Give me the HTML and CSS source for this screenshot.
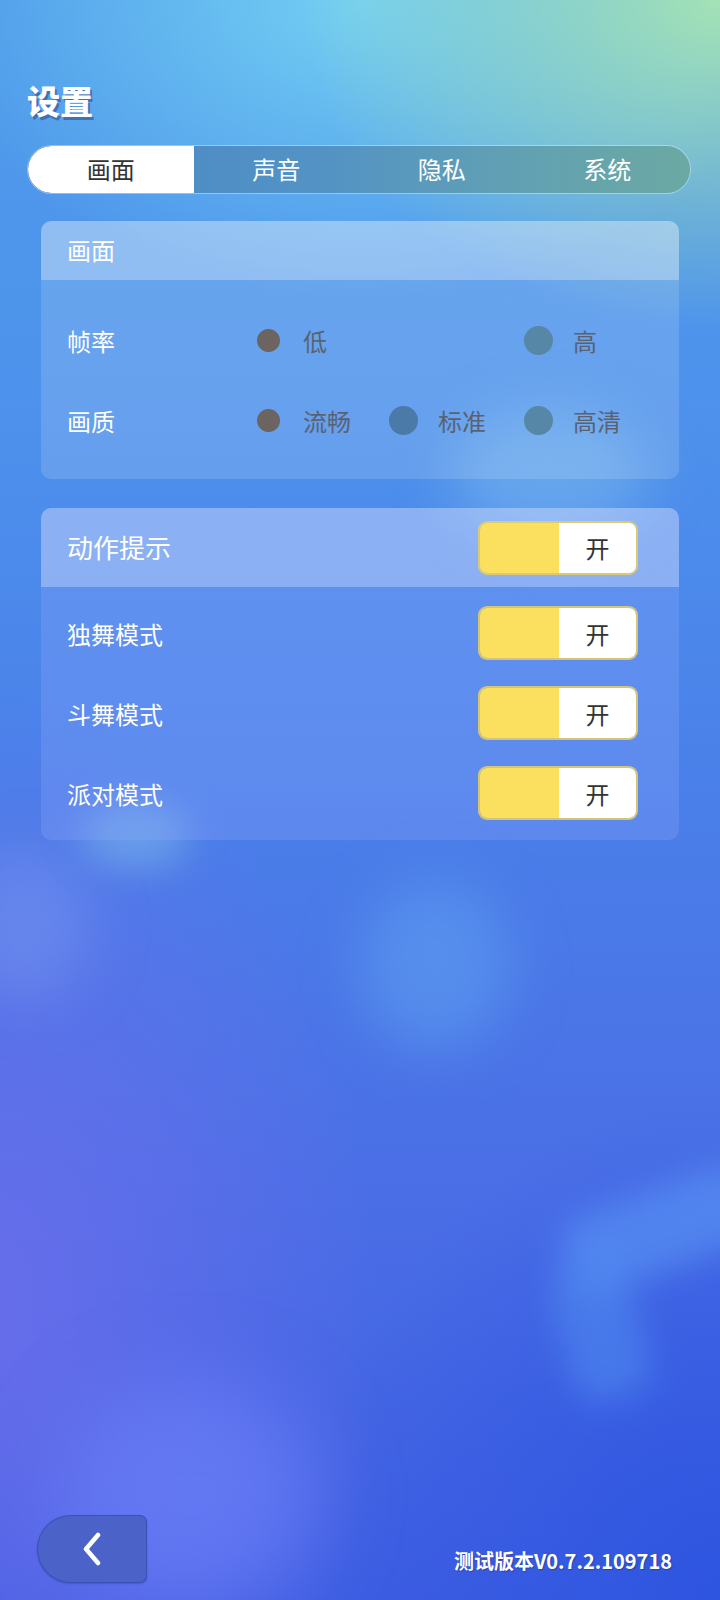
FILE: index.html
```html
<!DOCTYPE html>
<html lang="zh-CN">
<head>
  <meta charset="UTF-8" />
  <meta name="viewport" content="width=device-width, initial-scale=1" />
  <title>设置</title>
  <link rel="stylesheet" href="styles.css">
</head>
<body>
  <div class="screen">
    <!-- soft blurred shapes behind the content -->
    <div class="blob blob-a"></div>
    <div class="blob blob-b"></div>
    <div class="blob blob-c"></div>
    <div class="blob blob-d"></div>
    <div class="blob blob-e"></div>
    <div class="blob blob-f"></div>
    <div class="blob blob-g"></div>

    <h1 class="page-title">设置</h1>

    <nav class="tabs">
      <div class="tab active">画面</div>
      <div class="tab">声音</div>
      <div class="tab">隐私</div>
      <div class="tab">系统</div>
    </nav>

    <section class="panel">
      <div class="panel-head">画面</div>
      <div class="panel-body">
        <div class="option-row">
          <span class="row-label">帧率</span>
          <span class="choice"><i class="dot dot-on"></i>低</span>
          <span class="choice"></span>
          <span class="choice"><i class="dot dot-c"></i>高</span>
        </div>
        <div class="option-row">
          <span class="row-label">画质</span>
          <span class="choice"><i class="dot dot-on"></i>流畅</span>
          <span class="choice"><i class="dot dot-b"></i>标准</span>
          <span class="choice"><i class="dot dot-c"></i>高清</span>
        </div>
      </div>
    </section>

    <section class="panel panel-switches">
      <div class="panel-head switch-row">
        <span class="head-label">动作提示</span>
        <div class="switch"><span class="switch-on"></span><span class="switch-text">开</span></div>
      </div>
      <div class="panel-body switch-list">
        <div class="switch-row">
          <span class="row-label">独舞模式</span>
          <div class="switch"><span class="switch-on"></span><span class="switch-text">开</span></div>
        </div>
        <div class="switch-row">
          <span class="row-label">斗舞模式</span>
          <div class="switch"><span class="switch-on"></span><span class="switch-text">开</span></div>
        </div>
        <div class="switch-row">
          <span class="row-label">派对模式</span>
          <div class="switch"><span class="switch-on"></span><span class="switch-text">开</span></div>
        </div>
      </div>
    </section>

    <footer class="footer">
      <button class="back-btn" aria-label="返回">
        <svg width="22" height="34" viewBox="0 0 22 34">
          <path d="M17 3 L5 17 L17 31" fill="none" stroke="#fff" stroke-width="4.5" stroke-linecap="round" stroke-linejoin="round"/>
        </svg>
      </button>
      <span class="version">测试版本V0.7.2.109718</span>
    </footer>
  </div>
</body>
</html>
```

FILE: styles.css
```css
/* Page */
body {
  margin: 0;
  font-family: "Noto Sans CJK SC", "Noto Sans", sans-serif;
  color: #fff;
}

.screen {
  position: relative;
  overflow: hidden;
  width: 720px;
  height: 1600px;
  display: flex;
  flex-direction: column;
  background:
    radial-gradient(ellipse 420px 330px at 100% 0%, rgba(168, 230, 178, 0.95), rgba(168, 230, 178, 0) 100%),
    radial-gradient(ellipse 430px 300px at 50% 0%, rgba(118, 212, 244, 0.9), rgba(118, 212, 244, 0) 100%),
    radial-gradient(ellipse 380px 620px at 0% 82%, rgba(108, 110, 236, 0.85), rgba(108, 110, 236, 0) 100%),
    radial-gradient(ellipse 420px 500px at 100% 100%, rgba(44, 84, 224, 0.9), rgba(44, 84, 224, 0) 100%),
    linear-gradient(180deg, #4f9bea 0%, #4d92ec 25%, #4a7fe9 50%, #4a6ee6 75%, #3f5ee2 100%);
}

/* Blurred decoration */
.blob {
  position: absolute;
  border-radius: 50%;
  filter: blur(28px);
}
.blob-a { left: 360px; top: 880px; width: 150px; height: 170px; background: rgba(95, 160, 240, 0.55); }
.blob-b { left: 560px; top: 1190px; width: 200px; height: 80px; border-radius: 30px; transform: rotate(-20deg); background: rgba(90, 150, 245, 0.6); filter: blur(16px); }
.blob-c { left: 560px; top: 1260px; width: 80px; height: 140px; border-radius: 30px; transform: rotate(-15deg); background: rgba(80, 140, 240, 0.55); filter: blur(16px); }
.blob-d { left: 60px; top: 1380px; width: 260px; height: 230px; background: rgba(110, 130, 250, 0.6); filter: blur(40px); }
.blob-e { left: 450px; top: 410px; width: 200px; height: 130px; background: rgba(150, 210, 240, 0.35); }
.blob-f { left: -40px; top: 850px; width: 130px; height: 150px; background: rgba(120, 150, 240, 0.5); }
.blob-g { left: 80px; top: 800px; width: 110px; height: 70px; background: rgba(130, 190, 235, 0.5); filter: blur(18px); }

/* Title */
.page-title {
  position: relative;
  margin: 80px 0 0 27px;
  font-size: 33px;
  line-height: 40px;
  font-weight: 900;
  text-shadow: 2px 3px 0 rgba(52, 82, 150, 0.65);
}

/* Tab bar */
.tabs {
  position: relative;
  display: flex;
  margin: 26px 30px 0 28px;
  height: 47px;
  border-radius: 24px;
  overflow: hidden;
  background: linear-gradient(90deg, #4a87c7 0%, #5393c4 45%, #62a1b2 75%, #6ba9a3 100%);
  box-shadow: 0 0 0 1px rgba(255, 255, 255, 0.35);
}
.tab {
  flex: 1;
  display: flex;
  align-items: center;
  justify-content: center;
  padding-bottom: 3px;
  font-size: 24px;
  color: #fff;
}
.tab.active {
  background: #fff;
  color: #333;
  border-radius: 24px 0 0 24px;
}

/* Panels */
.panel {
  position: relative;
  margin: 28px 41px 0 41px;
  border-radius: 10px;
  overflow: hidden;
  background: rgba(255, 255, 255, 0.14);
}
.panel-switches {
  margin-top: 29px;
  background: rgba(150, 170, 255, 0.25);
}
.panel-head {
  height: 59px;
  display: flex;
  align-items: center;
  padding: 0 26px 2px;
  box-sizing: border-box;
  font-size: 24px;
  background: rgba(255, 255, 255, 0.28);
}
.panel-body {
  padding: 20px 26px 19px;
}

.option-row {
  display: grid;
  grid-template-columns: 187px repeat(3, 135px);
  align-items: center;
  height: 80px;
}
.row-label {
  font-size: 24px;
}
.choice {
  display: flex;
  align-items: center;
  gap: 20px;
  font-size: 24px;
  color: #5a6272;
}
.dot {
  width: 29px;
  height: 29px;
  border-radius: 50%;
}
.dot-on { background: radial-gradient(circle, #6b6460 11px, rgba(107, 100, 96, 0) 12px); }
.dot-b { background: #4b79a8; }
.dot-c { background: #5787a6; }

/* Switch rows */
.switch-row {
  display: flex;
  align-items: center;
  justify-content: space-between;
  padding-right: 43px;
}
.panel-head.switch-row {
  height: 79px;
  padding-right: 43px;
  padding-bottom: 0;
}
.head-label {
  font-size: 26px;
  padding-bottom: 3px;
}
.switch-list {
  display: flex;
  flex-direction: column;
  gap: 30px;
  padding: 21px 0 22px 26px;
}
.switch {
  display: flex;
  width: 156px;
  height: 50px;
  border-radius: 7px;
  overflow: hidden;
  box-shadow: 0 0 0 2px rgba(232, 206, 96, 0.85);
}
.switch-on {
  width: 79px;
  background: #fbe05f;
}
.switch-text {
  flex: 1;
  display: flex;
  align-items: center;
  justify-content: center;
  background: #fff;
  color: #333;
  font-size: 24px;
}

/* Footer */
.footer {
  position: relative;
  margin-top: auto;
  display: flex;
  align-items: flex-end;
  justify-content: space-between;
  padding: 0 48px 17px 37px;
}
.back-btn {
  width: 110px;
  height: 68px;
  padding: 0;
  border: 1px solid rgba(50, 70, 170, 0.6);
  border-radius: 34px 7px 7px 34px;
  background: #4b62c9;
  display: flex;
  align-items: center;
  justify-content: center;
  box-shadow: 0 1px 2px rgba(30, 40, 120, 0.3);
}
.version {
  margin-bottom: 8px;
  font-size: 20px;
  font-weight: bold;
  line-height: 28px;
  text-shadow: 1px 1px 1px rgba(30, 40, 120, 0.45);
}
```
